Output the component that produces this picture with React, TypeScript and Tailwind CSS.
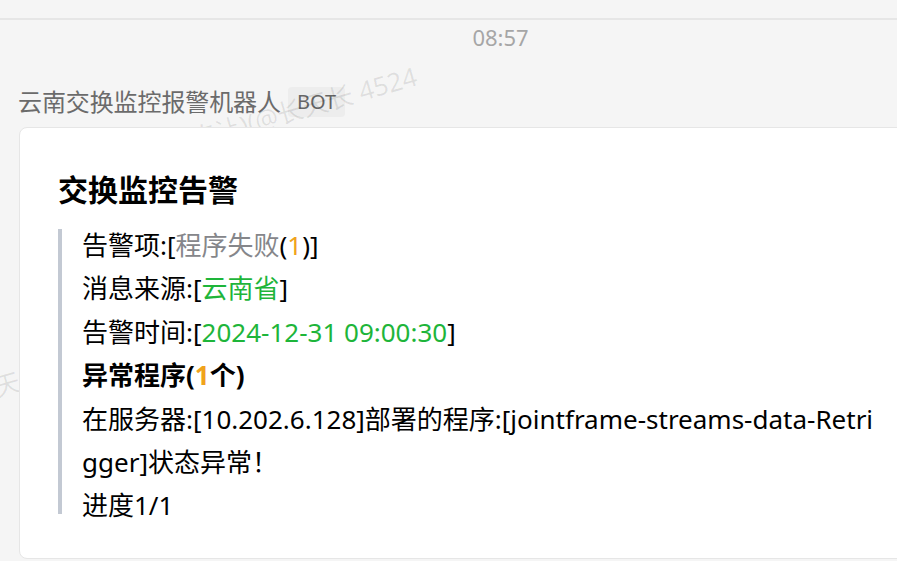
const font = "font-['Noto_Sans','Noto_Sans_CJK_SC',sans-serif]";

const Watermark = ({ className }: { className: string }) => (
  <div
    className={`absolute whitespace-nowrap text-[26px] leading-none text-black/[0.09] -rotate-[16deg] origin-left pointer-events-none ${className}`}
  >
    陈让)(@长天长 4524
  </div>
);

export default function App() {
  return (
    <div className={`relative w-[897px] h-[561px] overflow-hidden bg-[#f5f5f5] ${font}`}>
      <Watermark className="left-[190px] top-[127px]" />
      <Watermark className="left-[-118px] top-[407px]" />

      <div className="h-[18px]" />
      <div className="h-[2px] bg-[#e6e6e6]" />

      <div className="flex justify-center pl-[104px] mt-[4px]">
        <span className="text-[22px] leading-[26px] text-[#a6a6a6]">08:57</span>
      </div>

      <div className="flex items-center mt-[37px] pl-[18px] h-[30px]">
        <span className="text-[24px] leading-[30px] text-[#6b6b6b] tracking-[-0.1px]">
          云南交换监控报警机器人
        </span>
        <span className="ml-[7px] h-[30px] px-[9px] rounded-[4px] bg-[#ebebeb]/80 text-[20px] leading-[30px] text-[#666]">
          BOT
        </span>
      </div>

      <div className="relative z-10 mt-[10px] ml-[19px] w-[920px] bg-white border border-[#e6e6e6] rounded-[8px] pt-[42px] pb-[44px] pl-[38px]">
        <h2 className="text-[30px] leading-[40px] font-bold text-black">交换监控告警</h2>

        <div className="flow-root mt-[19px] border-l-4 border-[#c3c9d3] pl-[20px] h-[285px]">
          <div className="-mt-[5px] w-[804px] text-[26px] leading-[43.4px] text-black break-all">
            <div>
              告警项:[<span className="text-[#85868a]">程序失败</span>(
              <span className="text-[#f0a31c]">1</span>)]
            </div>
            <div>
              消息来源:[<span className="text-[#1eb53a]">云南省</span>]
            </div>
            <div>
              告警时间:[<span className="text-[#1eb53a]">2024-12-31 09:00:30</span>]
            </div>
            <div className="font-bold">
              异常程序(<span className="text-[#f0a31c]">1</span>个)
            </div>
            <div>
              在服务器:[10.202.6.128]部署的程序:[jointframe-streams-data-Retrigger]状态异常！
            </div>
            <div>进度1/1</div>
          </div>
        </div>
      </div>
    </div>
  );
}
